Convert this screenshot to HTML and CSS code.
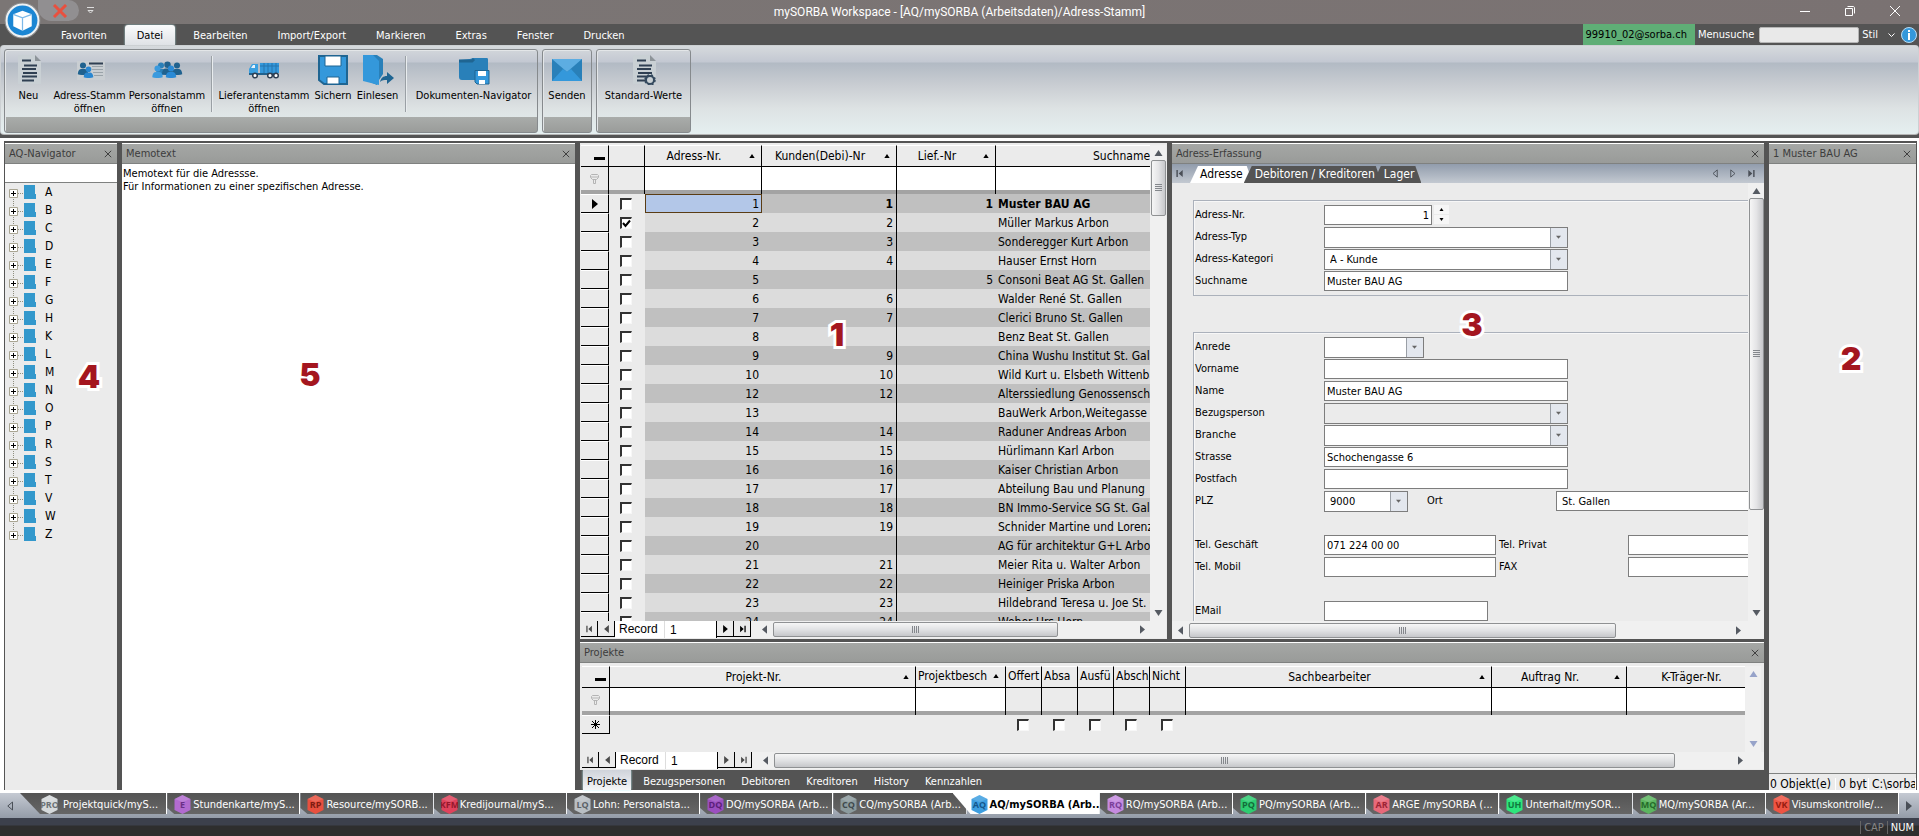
FILE: index.html
```html
<!doctype html>
<html lang="de">
<head>
  <meta charset="UTF-8">
  <meta name="viewport" content="width=device-width, initial-scale=1.0">
  <title>mySORBA Workspace</title>
  <link rel="stylesheet" href="styles.css">
</head>
<body>
  <svg class="defs" width="0" height="0">
    <symbol id="x" viewBox="0 0 10 10"><path d="M1 1l8 8M9 1l-8 8" fill="none" stroke="currentColor" stroke-width="1.2"/></symbol>
    <symbol id="up" viewBox="0 0 8 6"><path d="M0 6h8L4 0z" fill="currentColor"/></symbol>
    <symbol id="down" viewBox="0 0 8 6"><path d="M0 0h8L4 6z" fill="currentColor"/></symbol>
    <symbol id="left" viewBox="0 0 6 10"><path d="M6 0v10L0 5z" fill="currentColor"/></symbol>
    <symbol id="right" viewBox="0 0 6 10"><path d="M0 0v10l6-5z" fill="currentColor"/></symbol>
    <symbol id="left-o" viewBox="0 0 6 10"><path d="M5.500 1v8L.800 5z" fill="none" stroke="currentColor"/></symbol>
    <symbol id="right-o" viewBox="0 0 6 10"><path d="M.500 1v8l4.700-4z" fill="none" stroke="currentColor"/></symbol>
    <symbol id="first" viewBox="0 0 8 10"><path d="M0 1h1.6v8H0zM7 1v8L2.500 5z" fill="currentColor"/></symbol>
    <symbol id="last" viewBox="0 0 8 10"><path d="M6.400 1H8v8H6.400zM1 1v8l4.500-4z" fill="currentColor"/></symbol>
    <symbol id="filter" viewBox="0 0 9 10"><path d="M1.500.500h6l1 1v2l-2 2h-4l-2-2v-2zM3.500 5.500v4h2v-4M1 3h7" fill="none" stroke="currentColor"/></symbol>
    <symbol id="page" viewBox="0 0 32 32"><path d="M5 2h17v6h6v23H5z" fill="#c9d0d4"/><path d="M22 2v6h6z" fill="#8d9499"/><path d="M9 7.500h9M11 12.500h13M9 16h14M10 20h14M9 23.500h15M9 27.500h12" stroke="#2f3f52" stroke-width="2"/></symbol>
    <symbol id="person" viewBox="0 0 12 15"><circle cx="6" cy="4" r="3.500"/><path d="M0 14c0-4 2-6 4-6h4c2 0 4 2 4 6-3 1.400-9 1.400-12 0z"/></symbol>
  </svg>

  <header class="titlebar">
    <button class="orb" aria-label="Anwendungsmenü">
      <svg viewBox="0 0 36 36"><circle cx="18" cy="18" r="17" fill="#eef1f3" stroke="#8b8b8b"/><circle cx="18" cy="18" r="14.500" fill="#1b86d3"/><path d="M18 8.500l9 3.500v11.500L18 28l-9-4.500V12z" fill="#fff"/><path d="M9 12l9 3.500 9-3.500M18 15.500V28" fill="none" stroke="#7cb9e8" stroke-width="1.200"/></svg>
    </button>
    <div class="quick">
      <button aria-label="Schliessen"><svg width="16" height="14" viewBox="0 0 16 14"><path d="M2 1l12 12M14 1L2 13" stroke="#e8503f" stroke-width="3"/></svg></button>
    </div>
    <button class="quick-more" aria-label="Anpassen"><svg width="7" height="7" viewBox="0 0 7 7"><path d="M0 .500h7M1 3.500h5L3.500 6z" fill="none" stroke="#ddd"/></svg></button>
    <h1>mySORBA Workspace - [AQ/mySORBA (Arbeitsdaten)/Adress-Stamm]</h1>
    <div class="window-buttons">
      <button aria-label="Minimieren"><svg width="10" height="10" viewBox="0 0 10 10"><path d="M0 5.500h10" stroke="#fff"/></svg></button>
      <button aria-label="Wiederherstellen"><svg width="10" height="10" viewBox="0 0 10 10"><path d="M.500 2.500h7v7h-7zM2.500.500h5.500c1 0 1.500.500 1.500 1.500v5.500" fill="none" stroke="#fff"/></svg></button>
      <button aria-label="Beenden"><svg width="10" height="10" viewBox="0 0 10 10"><path d="M0 0l10 10M10 0L0 10" stroke="#fff"/></svg></button>
    </div>
  </header>

  <nav class="menubar">
    <a href="#">Favoriten</a>
    <a href="#" class="active">Datei</a>
    <a href="#">Bearbeiten</a>
    <a href="#">Import/Export</a>
    <a href="#">Markieren</a>
    <a href="#">Extras</a>
    <a href="#">Fenster</a>
    <a href="#">Drucken</a>
    <div class="menu-right">
      <span class="account">99910_02@sorba.ch</span>
      <label for="menusuche">Menusuche</label>
      <input id="menusuche" type="text">
      <button class="stil">Stil <svg width="7" height="4" viewBox="0 0 7 4"><path d="M.500.500l3 3 3-3" fill="none" stroke="#fff"/></svg></button>
      <button aria-label="Info"><svg width="16" height="16" viewBox="0 0 16 16"><circle cx="8" cy="8" r="7.500" fill="#3498db" stroke="#b9dcf3"/><path d="M7 3h2v2H7zM7 6h2v7H7z" fill="#fff"/></svg></button>
    </div>
  </nav>

  <section class="ribbon">
    <div class="group">
      <button class="w-neu"><svg viewBox="0 0 32 32"><use href="#page"/></svg>Neu</button>
      <button class="w-adr"><svg viewBox="0 0 32 32"><path d="M3 8h28v19H3z" fill="#c9ced2"/><path d="M15 10.500h14" stroke="#2f3f52" stroke-width="2"/><path d="M18 13.500h11M18 16.500h11M19 19.500h10M20 22.500h9" stroke="#9aa3a9"/><use href="#person" x="3" y="9" width="12" height="13" fill="#20628f"/><use href="#person" x="9" y="13" width="11" height="12" fill="#2a87d0"/></svg>Adress-Stamm<br>öffnen</button>
      <button class="w-per"><svg viewBox="0 0 32 32"><use href="#person" x="4" y="9" width="12" height="13" fill="#2a7fb8"/><use href="#person" x="11" y="8" width="11" height="14" fill="#20628f"/><use href="#person" x="20" y="9" width="12" height="13" fill="#20628f"/><use href="#person" x="1" y="12" width="11" height="13" fill="#3a9ade"/><use href="#person" x="14" y="12" width="12" height="13" fill="#2a8ad6"/></svg>Personalstamm<br>öffnen</button>
      <span class="divider"></span>
      <button class="w-lie"><svg viewBox="0 0 32 32"><path d="M12 10h19v10H12z" fill="#3498db"/><path d="M12 13h19M16 10v10M20 10v10M24 10v10M28 10v10" stroke="#2775ad"/><path d="M1 20v-4l3-5h6v10H1z" fill="#3ba0e0"/><path d="M3 15l2-3h2v3z" fill="#e8f3fa"/><path d="M1 20h29v2H1z" fill="#20628f"/><g fill="#fff" stroke="#2f3f52" stroke-width="1.500"><circle cx="7" cy="22.500" r="2.300"/><circle cx="22" cy="22.500" r="2.300"/><circle cx="28" cy="22.500" r="2.300"/></g></svg>Lieferantenstamm<br>öffnen</button>
      <button class="w-sic"><svg viewBox="0 0 32 32"><path d="M2 3h28v28H7l-5-4z" fill="#3498db" stroke="#1f6592" stroke-width="2"/><path d="M8 3h16v10H8zM10 24h12v7H10z" fill="#fff" stroke="#1f6592"/></svg>Sichern</button>
      <button class="w-ein"><svg viewBox="0 0 32 32"><path d="M1 2h14l6 4v15l-4 6-2 5-12-5z" fill="#2980b9"/><path d="M1 2h10l6 6v24L1 28z" fill="#3498db"/><path d="M18 29c1-4 3-6 7-6v-4l7 6-7 6v-4c-3 0-5 0-7 2z" fill="#1f6592"/></svg>Einlesen</button>
      <span class="divider"></span>
      <button class="w-dok"><svg viewBox="0 0 32 32"><path d="M1 7l11-1 3-1h14c1 0 1 1 1 2v20H4c-2 0-3-1-3-3z" fill="#2980b9"/><path d="M1 8h13l2-2" fill="none" stroke="#1f6592" stroke-width="3"/><path d="M17 17.500h14V31H19l-2-2z" fill="#3498db" stroke="#1f6592"/><path d="M20 18h8v5h-8zM21 27h6v4h-6z" fill="#fff"/></svg>Dokumenten-Navigator</button>
    </div>
    <div class="group">
      <button class="w-sen"><svg viewBox="0 0 32 32"><path d="M1 6h30v22H1z" fill="#2980b9"/><path d="M1 6h30L16 19z" fill="#5dade2"/><path d="M1 28l11-12 4 3 4-3 11 12z" fill="#3498db"/></svg>Senden</button>
    </div>
    <div class="group">
      <button class="w-sta"><svg viewBox="0 0 32 32"><use href="#page"/><circle cx="22" cy="27" r="4" fill="#c9d0d4" stroke="#34495e" stroke-width="2"/><circle cx="22" cy="27" r="5" fill="none" stroke="#34495e" stroke-width="1.500" stroke-dasharray="2 2"/></svg>Standard-Werte</button>
    </div>
  </section>

  <main class="dock">
    <aside class="panel nav">
      <header><h2>AQ-Navigator</h2><button aria-label="Schliessen"><svg><use href="#x"/></svg></button></header>
      <input type="text" class="nav-search" aria-label="Navigator-Suche">
      <ul class="tree" id="tree"></ul>
      <span class="marker m4">4</span>
    </aside>

    <section class="panel memo">
      <header><h2>Memotext</h2><button aria-label="Schliessen"><svg><use href="#x"/></svg></button></header>
      <p>Memotext für die Adressse.<br>Für Informationen zu einer spezifischen Adresse.</p>
      <span class="marker m5">5</span>
    </section>

    <div class="center">
      <div class="upper">
        <section class="panel grid-panel">
          <div class="grid-area">
            <div class="grid-clip">
              <table class="grid addresses">
                <colgroup><col class="c-head"><col class="c-check"><col class="c-adr"><col class="c-kun"><col class="c-lief"><col class="c-such"></colgroup>
                <thead>
                  <tr>
                    <th class="rowhead"><i class="minus"></i></th><th></th>
                    <th><button>Adress-Nr.<svg><use href="#up"/></svg></button></th>
                    <th><button>Kunden(Debi)-Nr<svg><use href="#up"/></svg></button></th>
                    <th><button>Lief.-Nr<svg><use href="#up"/></svg></button></th>
                    <th><button>Suchname<svg><use href="#up"/></svg></button></th>
                  </tr>
                  <tr class="filter"><td class="rowhead"><svg><use href="#filter"/></svg></td><td class="off"></td><td></td><td></td><td></td><td></td></tr>
                </thead>
                <tbody id="rows"></tbody>
              </table>
            </div>
            <div class="vscroll"><svg><use href="#up"/></svg><div class="thumb short"></div><svg class="end"><use href="#down"/></svg></div>
          </div>
          <div class="record">
            <button class="dim" aria-label="Erster"><svg><use href="#first"/></svg></button>
            <button class="dim" aria-label="Zurück"><svg><use href="#left"/></svg></button>
            <label for="rec1">Record</label><input id="rec1" type="text" value="1">
            <button aria-label="Weiter"><svg><use href="#right"/></svg></button>
            <button aria-label="Letzter"><svg><use href="#last"/></svg></button>
            <div class="hscroll"><svg><use href="#left"/></svg><div class="track"><div class="thumb h-addr"></div></div><svg><use href="#right"/></svg></div>
          </div>
          <span class="marker m1">1</span>
        </section>

        <section class="panel form-panel">
          <header><h2>Adress-Erfassung</h2><button aria-label="Schliessen"><svg><use href="#x"/></svg></button></header>
          <div class="form-tabs">
            <button class="arrow" aria-label="Anfang"><svg><use href="#first"/></svg></button>
            <a href="#" class="active">Adresse</a>
            <a href="#">Debitoren / Kreditoren</a>
            <a href="#">Lager</a>
            <div class="arrows">
              <button class="arrow" aria-label="Links"><svg><use href="#left-o"/></svg></button>
              <button class="arrow" aria-label="Rechts"><svg><use href="#right-o"/></svg></button>
              <button class="arrow" aria-label="Ende"><svg><use href="#last"/></svg></button>
            </div>
          </div>
          <div class="form-area">
            <form class="form-clip">
              <fieldset>
                <div class="row"><label for="nr">Adress-Nr.</label><input id="nr" type="text" class="s-nr" value="1"><span class="spin"><button type="button" aria-label="Mehr"><svg><use href="#up"/></svg></button><button type="button" aria-label="Weniger"><svg><use href="#down"/></svg></button></span></div>
                <div class="row"><label for="typ">Adress-Typ</label><select id="typ" class="s-full"><option></option></select></div>
                <div class="row"><label for="kat">Adress-Kategori</label><select id="kat" class="s-full"><option>A - Kunde</option></select></div>
                <div class="row"><label for="such">Suchname</label><input id="such" type="text" class="s-full" value="Muster BAU AG"></div>
              </fieldset>
              <fieldset>
                <div class="row"><label for="anr">Anrede</label><select id="anr" class="s-anr"><option></option></select></div>
                <div class="row"><label for="vor">Vorname</label><input id="vor" type="text" class="s-full"></div>
                <div class="row"><label for="nam">Name</label><input id="nam" type="text" class="s-full" value="Muster BAU AG"></div>
                <div class="row"><label for="bez">Bezugsperson</label><select id="bez" class="s-full grey"><option></option></select></div>
                <div class="row"><label for="bra">Branche</label><select id="bra" class="s-full"><option></option></select></div>
                <div class="row"><label for="str">Strasse</label><input id="str" type="text" class="s-full" value="Schochengasse 6"></div>
                <div class="row"><label for="pf">Postfach</label><input id="pf" type="text" class="s-full"></div>
                <div class="row"><label for="plz">PLZ</label><select id="plz" class="s-plz"><option>9000</option></select><label for="ort" class="l-ort">Ort</label><input id="ort" type="text" class="s-ort" value="St. Gallen"></div>
                <div class="row gap"><label for="tg">Tel. Geschäft</label><input id="tg" type="text" class="s-tel" value="071 224 00 00"><label for="tp" class="l-tel">Tel. Privat</label><input id="tp" type="text" class="s-tel"></div>
                <div class="row"><label for="tm">Tel. Mobil</label><input id="tm" type="text" class="s-tel"><label for="fax" class="l-tel">FAX</label><input id="fax" type="text" class="s-tel"></div>
                <div class="row gap"><label for="em">EMail</label><input id="em" type="text" class="s-mail"></div>
              </fieldset>
            </form>
            <div class="vscroll"><svg><use href="#up"/></svg><div class="thumb tall"></div><svg class="end"><use href="#down"/></svg></div>
          </div>
          <div class="hscroll form-scroll"><svg><use href="#left"/></svg><div class="track"><div class="thumb h-form"></div></div><svg><use href="#right"/></svg></div>
          <span class="marker m3">3</span>
        </section>
      </div>

      <section class="panel projects">
        <header><h2>Projekte</h2><button aria-label="Schliessen"><svg><use href="#x"/></svg></button></header>
        <div class="grid-area">
          <div class="grid-clip">
            <table class="grid">
              <colgroup><col class="c-head"><col class="c-wide"><col class="c-besch"><col span="5" class="c-flag"><col class="c-wide"><col class="c-kun"><col class="c-ktr"></colgroup>
              <thead>
                <tr>
                  <th class="rowhead"><i class="minus"></i></th>
                  <th><button>Projekt-Nr.<svg><use href="#up"/></svg></button></th>
                  <th class="top"><button>Projektbesch<svg><use href="#up"/></svg></button></th>
                  <th class="top">Offert</th><th class="top">Absa</th><th class="top">Ausfü</th><th class="top">Absch</th><th class="top">Nicht</th>
                  <th><button>Sachbearbeiter<svg><use href="#up"/></svg></button></th>
                  <th><button>Auftrag Nr.<svg><use href="#up"/></svg></button></th>
                  <th><button>K-Träger-Nr.<svg><use href="#up"/></svg></button></th>
                </tr>
                <tr class="filter"><td class="rowhead"><svg><use href="#filter"/></svg></td><td></td><td></td><td class="off"></td><td class="off"></td><td class="off"></td><td class="off"></td><td class="off"></td><td></td><td></td><td></td></tr>
              </thead>
              <tbody>
                <tr class="new">
                  <td class="rowhead"><svg class="star" viewBox="0 0 9 9"><path d="M4.500 0v9M0 4.500h9M1 1l7 7M8 1L1 8" stroke="#000"/></svg></td><td></td><td></td>
                  <td><input type="checkbox" aria-label="Offert"></td><td><input type="checkbox" aria-label="Absage"></td><td><input type="checkbox" aria-label="Ausführung"></td><td><input type="checkbox" aria-label="Abschluss"></td><td><input type="checkbox" aria-label="Nicht"></td>
                  <td></td><td></td><td></td>
                </tr>
              </tbody>
            </table>
          </div>
          <div class="vscroll idle"><svg><use href="#up"/></svg><svg class="end"><use href="#down"/></svg></div>
        </div>
        <div class="record">
          <button class="dim" aria-label="Erster"><svg><use href="#first"/></svg></button>
          <button class="dim" aria-label="Zurück"><svg><use href="#left"/></svg></button>
          <label for="rec2">Record</label><input id="rec2" type="text" value="1">
          <button class="dim" aria-label="Weiter"><svg><use href="#right"/></svg></button>
          <button class="dim" aria-label="Letzter"><svg><use href="#last"/></svg></button>
          <div class="hscroll"><svg><use href="#left"/></svg><div class="track"><div class="thumb h-proj"></div></div><svg><use href="#right"/></svg></div>
        </div>
      </section>
      <nav class="sub-tabs">
        <a href="#" class="active">Projekte</a><a href="#">Bezugspersonen</a><a href="#">Debitoren</a><a href="#">Kreditoren</a><a href="#">History</a><a href="#">Kennzahlen</a>
      </nav>
    </div>

    <aside class="panel side">
      <header><h2>1 Muster BAU AG</h2><button aria-label="Schliessen"><svg><use href="#x"/></svg></button></header>
      <div class="side-body"></div>
      <footer><span class="f-obj">0 Objekt(e)</span><span class="f-byte">0 byt</span><span class="f-path">C:\sorba</span></footer>
      <span class="marker m2">2</span>
    </aside>
  </main>

  <nav class="doc-tabs">
    <button aria-label="Links"><svg><use href="#left-o"/></svg></button>
    <div id="docs"></div>
    <button aria-label="Rechts"><svg><use href="#right"/></svg></button>
  </nav>

  <footer class="statusbar"><span>CAP</span><span class="on">NUM</span></footer>

  <script src="script.js"></script>
</body>
</html>
```
FILE: styles.css
```css
* {
  box-sizing: border-box;
}
html, body {
  margin: 0;
  padding: 0;
}
body {
  display: flex;
  flex-direction: column;
  height: 100vh;
  overflow: hidden;
  background: #545454;
  color: #000;
  font: 11px/13px "DejaVu Sans Condensed", "Noto Sans", sans-serif;
}
button, input, select {
  margin: 0;
  padding: 0;
  border: 0;
  border-radius: 0;
  background: none;
  color: inherit;
  font: inherit;
  outline: 0;
}
a {
  color: inherit;
  text-decoration: none;
}
h1, h2, p, ul {
  margin: 0;
  padding: 0;
  font-size: inherit;
  font-weight: normal;
}
.defs {
  display: block;
}

/* title */
.titlebar {
  position: relative;
  display: flex;
  align-items: center;
  justify-content: center;
  height: 24px;
  flex: none;
  background: linear-gradient(90deg, #7b7675, #7a7272);
  color: #fff;
}
.titlebar h1 {
  font: 12px/22px Roboto, "Noto Sans", sans-serif;
}
.orb {
  position: absolute;
  left: 4px;
  top: 2px;
  z-index: 2;
  width: 37px;
  height: 37px;
}
.orb svg {
  display: block;
  width: 100%;
}
.quick {
  position: absolute;
  left: 38px;
  top: 0;
  width: 41px;
  height: 21px;
  padding: 4px 0 0 14px;
  background: #918f91;
  border-radius: 0 11px 11px 14px;
}
.quick-more {
  position: absolute;
  left: 87px;
  top: 4px;
}
.window-buttons {
  position: absolute;
  right: 2px;
  top: 0;
  display: flex;
}
.window-buttons button {
  width: 45px;
  height: 24px;
}

/* menu */
.menubar {
  display: flex;
  align-items: flex-end;
  gap: 6px;
  flex: none;
  height: 21px;
  padding-left: 49px;
  background: #545454;
  color: #fff;
}
.menubar a {
  height: 20px;
  padding: 0 12px;
  line-height: 22px;
}
.menubar a.active {
  background: linear-gradient(#fafbfc, #dfe2e6);
  border-radius: 3px 3px 0 0;
  box-shadow: 0 0 2px #bdf3f7;
  color: #000;
}
.menu-right {
  display: flex;
  align-items: center;
  margin-left: auto;
  height: 21px;
  gap: 3px;
  padding-right: 2px;
}
.account {
  height: 21px;
  padding: 0 8px 0 3px;
  background: #5fae76;
  color: #000;
  line-height: 22px;
}
.menu-right label {
  padding-right: 2px;
}
.menu-right input {
  width: 100px;
  height: 16px;
  background: #e9e9e9;
  border: 1px solid #b5b5b5;
  border-radius: 2px;
}
.menu-right button {
  display: flex;
  align-items: center;
  gap: 10px;
}
.menu-right .stil {
  margin-right: 3px;
}

/* ribbon */
.ribbon {
  display: flex;
  gap: 4px;
  flex: none;
  height: 90px;
  padding: 3px 3px 2px;
  background: linear-gradient(#d6dadd, #c3c8d2 16px, #b2bac4 17px, #caced3 40px, #dde2e3 62px, #e5eff0);
  border: 1px solid #ccd0d3;
  border-bottom-color: #b5b5b5;
  border-radius: 4px;
}
.group {
  display: flex;
  align-items: flex-start;
  height: 84px;
  padding-top: 3px;
  border: 1px solid #868a8d;
  border-radius: 3px;
  box-shadow: inset 1px 1px #e3e6e8;
  background: linear-gradient(transparent 82%, #a9acaa 82%, #9a9c9a);
}
.group button {
  display: flex;
  flex-direction: column;
  align-items: center;
  height: 62px;
  text-align: center;
  white-space: nowrap;
}
.group svg {
  flex: none;
  width: 32px;
  height: 32px;
  margin-bottom: 4px;
}
.divider {
  width: 1px;
  height: 56px;
  margin: 3px 4px 0;
  background: #9aa0a5;
  box-shadow: 1px 0 #e8ecee;
}
.w-neu { width: 47px; }
.w-adr { width: 75px; }
.w-per { width: 80px; }
.w-lie { width: 96px; }
.w-sic { width: 42px; }
.w-ein { width: 47px; }
.w-dok { width: 127px; }
.w-sen { width: 48px; }
.w-sta { width: 93px; }

/* dock */
.dock {
  display: flex;
  gap: 5px;
  flex: 1;
  min-height: 0;
  margin-top: 3px;
  padding: 2px 1px 0 1px;
  border: 4px solid #fff;
  border-width: 3px 2px 3px 4px;
  background: #545454;
}
.panel {
  position: relative;
  display: flex;
  flex-direction: column;
  min-width: 0;
  background: #ebebeb;
}
.panel > header {
  display: flex;
  align-items: center;
  flex: none;
  height: 21px;
  padding: 0 5px 0 4px;
  background: linear-gradient(#a5a7a5, #999b99);
  border-top: 1px solid #fff;
  border-bottom: 1px solid #7f8180;
  color: #3c3c3c;
}
.panel > header h2 {
  flex: 1;
  white-space: nowrap;
}
.panel > header svg {
  display: block;
  width: 8px;
  height: 8px;
}
.nav {
  width: 112px;
  flex: none;
}
.nav-search {
  flex: none;
  width: 100%;
  height: 19px;
  background: #fff;
  border-bottom: 1px solid #7f8180;
}
.tree {
  list-style: none;
  padding-left: 4px;
  overflow: hidden;
}
.tree li {
  display: flex;
  align-items: center;
  height: 18px;
  font-size: 12px;
}
.tree svg {
  width: 27px;
  height: 18px;
  margin-right: 9px;
}
.memo {
  width: 453px;
  flex: none;
  background: #fff;
}
.memo p {
  padding: 3px 1px;
}
.center {
  display: flex;
  flex-direction: column;
  flex: 1;
  min-width: 0;
}
.upper {
  display: flex;
  gap: 5px;
  flex: 1;
  min-height: 0;
  margin-bottom: 3px;
}
.grid-panel {
  flex: 1;
  padding: 2px 1px 1px;
}
.side {
  width: 147px;
  flex: none;
  overflow: hidden;
}
.side-body {
  flex: 1;
}
.side footer {
  display: flex;
  gap: 3px;
  height: 17px;
  padding: 4px 0 0 1px;
  border-top: 1px solid #7f8180;
  overflow: hidden;
  font-size: 12px;
  white-space: nowrap;
}
.side footer span {
  overflow: hidden;
  border-right: 1px solid #fff;
}
.f-obj { width: 66px; }
.f-byte { width: 30px; }
.f-path { flex: 1; }

/* grids */
.grid-area {
  display: flex;
  flex: 1;
  min-height: 0;
}
.grid-clip {
  flex: 1;
  min-width: 0;
  overflow: hidden;
}
.grid {
  width: 100px;
  table-layout: fixed;
  border-collapse: separate;
  border-spacing: 0;
  font-size: 12px;
  line-height: 14px;
  white-space: nowrap;
}
.c-head { width: 28px; }
.c-check { width: 36px; }
.c-adr { width: 117px; }
.c-kun { width: 135px; }
.c-lief { width: 99px; }
.c-such { width: 270px; }
.c-wide { width: 306px; }
.c-besch { width: 90px; }
.c-flag { width: 36px; }
.c-ktr { width: 148px; }
.grid th, .grid td {
  padding: 0;
  overflow: hidden;
}
.grid th {
  height: 22px;
  border-top: 1px solid #fff;
  border-right: 1px solid #000;
  border-bottom: 1px solid #000;
  font-weight: normal;
}
.grid th.top {
  padding: 2px 0 0 2px;
  text-align: left;
  vertical-align: top;
}
.grid th button {
  display: flex;
  align-items: center;
  justify-content: center;
  position: relative;
  width: 100%;
  padding-right: 18px;
}
.grid th.top button {
  justify-content: flex-start;
  padding-right: 0;
}
.grid th svg {
  position: absolute;
  right: 5px;
  top: 5px;
  width: 8px;
  height: 4px;
}
.filter td {
  height: 27px;
  border-right: 1px solid #000;
  background: #fff;
  box-shadow: inset 0 -4px #a3a3a3;
}
.filter td.off, .filter td.rowhead {
  background: #ebebeb;
}
.filter svg {
  display: block;
  width: 9px;
  height: 10px;
  margin: 0 auto 3px;
  color: #b4b4b4;
}
.minus {
  display: block;
  width: 11px;
  height: 3px;
  margin: 4px 0 0 13px;
  background: #000;
}
.addresses tbody tr {
  background: #dcdcdc;
}
.addresses tbody tr:nth-child(odd) {
  background: #c0c0c0;
}
.grid tbody td {
  height: 19px;
  text-align: right;
  padding-right: 3px;
}
.grid tbody td.rowhead {
  padding: 0;
  border-top: 1px solid #fff;
  border-right: 1px solid #000;
  border-bottom: 1px solid #000;
  background: #ebebeb;
}
.grid tbody td.rowhead svg {
  display: block;
  width: 6px;
  height: 10px;
  margin: 0 auto;
}
.grid tbody td.rowhead .star {
  width: 9px;
  height: 9px;
}
.grid tbody td.check {
  background: #ebebeb;
}
.grid tbody td.kun {
  border-right: 1px solid #000;
}
.grid tbody td.name {
  padding-left: 2px;
  text-align: left;
}
.grid tbody .first td {
  font-weight: bold;
}
.grid tbody .first td.nr {
  border: 1px solid #5a3c14;
  background: #b3c7e8;
  font-weight: normal;
  padding-right: 2px;
}
.grid input {
  appearance: none;
  display: block;
  width: 12px;
  height: 12px;
  margin: 0 0 0 11px;
  background: #fff;
  border: 1px solid #f7f7f7;
  border-top: 2px solid #333;
  border-left: 2px solid #333;
}
.grid input:checked {
  background: #fff url("data:image/svg+xml,%3Csvg xmlns='http://www.w3.org/2000/svg' viewBox='0 0 9 9'%3E%3Cpath d='M1 4l2.500 3L8 1.500' fill='none' stroke='%23000' stroke-width='2'/%3E%3C/svg%3E");
}

/* scrollbars */
.vscroll {
  display: flex;
  flex-direction: column;
  align-items: center;
  gap: 4px;
  width: 16px;
  padding: 5px 0;
  background: #f0f0f0;
  color: #555a62;
}
.vscroll svg {
  flex: none;
  width: 9px;
  height: 6px;
}
.vscroll .end {
  margin-top: auto;
}
.vscroll.idle {
  margin-right: 2px;
  color: #97a3c9;
}
.vscroll .thumb {
  display: flex;
  width: 15px;
  background: linear-gradient(90deg, #f6f6f6, #e4e4e6 50%, #c6c7ca);
  border: 1px solid #8f9193;
  border-radius: 2px;
}
.vscroll .thumb::after {
  content: "";
  width: 7px;
  height: 8px;
  margin: auto;
  background: repeating-linear-gradient(#84878c 0 1px, transparent 1px 2px);
}
.thumb.short { height: 56px; }
.thumb.tall { height: 312px; }
.record {
  display: flex;
  flex: none;
  height: 17px;
  font: 12px/16px "Liberation Sans", Arial, sans-serif;
}
.record > button {
  width: 17px;
  height: 16px;
  border: 1px solid #000;
  border-width: 0 1px 1px 0;
  background: #ebebeb;
}
.record > button svg {
  display: block;
  width: 7px;
  height: 8px;
  margin: 0 auto;
}
.record > .dim {
  color: #4a4a4a;
}
.record label {
  width: 49px;
  padding-left: 4px;
  background: #fff;
}
.record input {
  width: 53px;
  padding-left: 5px;
  background: #fff;
  border-left: 1px solid #ddd;
  border-right: 1px solid #000;
}
.hscroll {
  display: flex;
  align-items: center;
  flex: 1;
  padding: 0 21px 0 11px;
  background: #f0f0f0;
  color: #555a62;
}
.hscroll svg {
  width: 5px;
  height: 9px;
}
.track {
  flex: 1;
  padding: 0 6px;
}
.hscroll .thumb {
  display: flex;
  height: 15px;
  background: linear-gradient(#f6f6f6, #e1e2e4 50%, #c6c7ca);
  border: 1px solid #8f9193;
  border-radius: 2px;
}
.hscroll .thumb::after {
  content: "";
  width: 7px;
  height: 7px;
  margin: auto;
  background: repeating-linear-gradient(90deg, #84878c 0 1px, transparent 1px 2px);
}
.h-addr { width: 79%; }
.h-form { width: 79%; }
.h-proj { width: 94%; }

/* form */
.form-panel {
  width: 592px;
  flex: none;
}
.form-tabs {
  display: flex;
  align-items: flex-end;
  flex: none;
  height: 19px;
  background: linear-gradient(#919cac, #c3c9d1);
  color: #fff;
}
.form-tabs a {
  height: 17px;
  margin-left: -9px;
  padding: 0 7px 0 11px;
  background: #545454;
  clip-path: polygon(0 100%, 8px 0, calc(100% - 6px) 0, 100% 100%);
  font-size: 12px;
  line-height: 17px;
}
.form-tabs a.active {
  position: relative;
  margin-left: 5px;
  padding: 0 10px;
  background: #fff;
  color: #000;
}
.form-tabs .arrow {
  width: 9px;
  height: 19px;
  margin-left: 4px;
  color: #4a4f57;
}
.arrow svg {
  display: block;
  width: 8px;
  height: 9px;
}
.arrows {
  display: flex;
  gap: 5px;
  margin-left: auto;
  padding-right: 8px;
}
.form-area {
  display: flex;
  flex: 1;
  min-height: 0;
}
.form-clip {
  flex: 1;
  min-width: 0;
  overflow: hidden;
  padding: 17px 0 0 21px;
}
fieldset {
  width: 700px;
  margin: 0 0 36px;
  padding: 4px 0 2px 1px;
  border: 1px solid #abb1bb;
  box-shadow: inset 1px 1px #f7f7f7;
}
.row {
  display: flex;
  height: 22px;
}
.row.gap {
  margin-top: 22px;
}
.row label {
  flex: none;
  width: 129px;
  padding-top: 3px;
}
.row input, .row select {
  flex: none;
  height: 20px;
  padding: 0 2px;
  background: #fff;
  border: 1px solid #7d7d7d;
}
.row select {
  appearance: none;
  height: 21px;
  padding: 0 20px 0 5px;
  background: #fff url("data:image/svg+xml,%3Csvg xmlns='http://www.w3.org/2000/svg' width='17' height='20'%3E%3Cpath d='M0 0h17v20H0z' fill='%23e3e7ee'/%3E%3Cpath d='M.500 0v20' stroke='%239a9fa6'/%3E%3Cpath d='M6 8h5L8.500 11z' fill='%23666'/%3E%3C/svg%3E") right center no-repeat;
}
.row .grey {
  background-color: #ebebeb;
}
.s-full { width: 244px; }
.s-anr { width: 100px; }
.s-plz { width: 84px; }
.s-tel { width: 172px; }
.s-mail { width: 164px; }
.s-ort { width: 244px; }
.row .s-nr {
  width: 108px;
  text-align: right;
}
.row .l-ort {
  margin-left: 19px;
}
.row .l-tel {
  margin-left: 3px;
}
.row .s-ort {
  padding-left: 5px;
}
.spin {
  display: flex;
  flex-direction: column;
  gap: 1px;
  margin-left: 2px;
}
.spin button {
  display: flex;
  width: 15px;
  height: 9px;
  background: #f6f6f6;
}
.spin svg {
  width: 5px;
  height: 3px;
  margin: auto;
}
.form-scroll {
  flex: none;
  height: 18px;
  padding: 0 23px 0 6px;
}

.projects {
  height: 128px;
  flex: none;
  padding-bottom: 1px;
}
.projects .grid-area {
  padding: 3px 1px 0 2px;
}
.projects .record {
  padding-left: 2px;
}
.sub-tabs {
  display: flex;
  flex: none;
  height: 20px;
  padding: 0 0 0 3px;
  color: #fff;
}
.sub-tabs a {
  padding: 0 8px;
  line-height: 23px;
}
.sub-tabs a.active {
  padding: 0 4px;
  background: linear-gradient(#cfd3da, #f4f5f7);
  box-shadow: 0 0 2px #bdf3f7;
  color: #000;
  margin-right: 4px;
}

/* number markers above the panels */
.marker {
  position: absolute;
  color: #a4161f;
  font: 900 32px/32px Inter, "Liberation Sans", sans-serif;
  -webkit-text-stroke: 6px #fff;
  paint-order: stroke fill;
  transform: translate(-50%, -50%);
}
.m1 { left: 257px; top: 192px; }
.m2 { left: 82px; top: 216px; }
.m3 { left: 300px; top: 182px; }
.m4 { left: 84px; top: 234px; }
.m5 { left: 188px; top: 232px; }

/* document tabs */
.doc-tabs {
  display: flex;
  flex: none;
  height: 25px;
  background: linear-gradient(#c5cad3, #949ca8);
}
.doc-tabs > button {
  width: 20px;
  color: #4a4f57;
}
.doc-tabs > button svg {
  display: block;
  width: 6px;
  height: 10px;
  margin: 0 auto;
}
#docs {
  display: flex;
  flex: 1;
  min-width: 0;
}
#docs a {
  display: flex;
  align-items: center;
  gap: 2px;
  flex: 1 1 133px;
  min-width: 0;
  height: 21px;
  padding: 1px 4px 0 7px;
  background: linear-gradient(#545454, #666);
  border-right: 1px solid #fff;
  clip-path: polygon(0 0, 100% 0, 100% 100%, 7px 100%, 0 15px);
  color: #fff;
  white-space: nowrap;
}
#docs a:first-child {
  flex: 1 1 147px;
  gap: 5px;
  padding-left: 21px;
  clip-path: polygon(0 0, 100% 0, 100% 100%, 20px 100%);
}
#docs a.active {
  flex: 1 1 147px;
  margin-left: -14px;
  padding-left: 18px;
  background: #fff;
  border: 0;
  clip-path: polygon(0 0, 100% 0, 100% 100%, 18px 100%);
  color: #000;
  font-weight: bold;
}
#docs svg {
  flex: none;
  width: 17px;
  height: 19px;
}
#docs text {
  font: bold 9px "Open Sans", sans-serif;
}

.statusbar {
  display: flex;
  justify-content: flex-end;
  align-items: center;
  flex: none;
  height: 18px;
  padding-right: 2px;
  background: linear-gradient(#3c404c 0 7px, #2e2e2e 8px);
  color: #858585;
}
.statusbar span {
  padding: 0 3px;
  border-left: 1px solid #666;
}
.statusbar .on {
  color: #fff;
}
```
FILE: script.js
```js
var rows = [
  ['1', '1', '1', 'Muster BAU AG'],
  ['2', '2', '', 'Müller Markus Arbon'],
  ['3', '3', '', 'Sonderegger Kurt Arbon'],
  ['4', '4', '', 'Hauser Ernst Horn'],
  ['5', '', '5', 'Consoni Beat AG St. Gallen'],
  ['6', '6', '', 'Walder René St. Gallen'],
  ['7', '7', '', 'Clerici Bruno St. Gallen'],
  ['8', '', '', 'Benz Beat St. Gallen'],
  ['9', '9', '', 'China Wushu Institut St. Gallen'],
  ['10', '10', '', 'Wild Kurt u. Elsbeth Wittenbach'],
  ['12', '12', '', 'Alterssiedlung Genossenschaft'],
  ['13', '', '', 'BauWerk Arbon,Weitegasse'],
  ['14', '14', '', 'Raduner Andreas Arbon'],
  ['15', '15', '', 'Hürlimann Karl Arbon'],
  ['16', '16', '', 'Kaiser Christian Arbon'],
  ['17', '17', '', 'Abteilung Bau und Planung'],
  ['18', '18', '', 'BN Immo-Service SG St. Gallen'],
  ['19', '19', '', 'Schnider Martine und Lorenz'],
  ['20', '', '', 'AG für architektur G+L Arbon'],
  ['21', '21', '', 'Meier Rita u. Walter Arbon'],
  ['22', '22', '', 'Heiniger Priska Arbon'],
  ['23', '23', '', 'Hildebrand Teresa u. Joe St. Gallen'],
  ['24', '24', '', 'Weber Urs Horn']
];

document.getElementById('rows').innerHTML = rows.map(function(r, i) {
  return '<tr' + (i == 0 ? ' class="first"' : '') + '>' +
    '<td class="rowhead">' + (i == 0 ? '<svg><use href="#right"/></svg>' : '') + '</td>' +
    '<td class="check"><input type="checkbox" aria-label="Auswahl ' + r[0] + '"' + (i == 1 ? ' checked' : '') + '></td>' +
    '<td class="nr">' + r[0] + '</td><td class="kun">' + r[1] + '</td><td>' + r[2] + '</td><td class="name">' + r[3] + '</td></tr>';
}).join('');

document.getElementById('tree').innerHTML = 'ABCDEFGHKLMNOPRSTVWZ'.split('').map(function(c, i) {
  return '<li><svg viewBox="0 0 27 18">' +
    '<path d="M4.500 ' + (i == 0 ? 10 : 0) + 'V' + (c == 'Z' ? 10 : 18) + 'M9 10.500h6" stroke="#8f8f80" stroke-dasharray="1 1"/>' +
    '<path d="M.500 6.500h8v8h-8z" fill="#fff" stroke="#a9a592"/><path d="M2 10.500h5M4.500 8v5" stroke="#000"/>' +
    '<path d="M15 2h11v9h1v5H15z" fill="#3398cc"/></svg>' + c + '</li>';
}).join('');

// code, caption, fill, letter colour
var docs = [
  ['PRO', 'Projektquick/myS...', '#d5d9db', '#6b7175'],
  ['E', 'Stundenkarte/myS...', '#b26bd0', '#6a2f86'],
  ['RP', 'Resource/mySORB...', '#e8503f', '#7d1c12'],
  ['KFM', 'Kredijournal/myS...', '#e0435c', '#96182c'],
  ['LQ', 'Lohn: Personalsta...', '#b9bfc4', '#5b6268'],
  ['DQ', 'DQ/mySORBA (Arb...', '#9b4fc0', '#5b2079'],
  ['CQ', 'CQ/mySORBA (Arb...', '#8c9b9e', '#3f4a4d'],
  ['AQ', 'AQ/mySORBA (Arb...', '#3d9ee0', '#14578c'],
  ['RQ', 'RQ/mySORBA (Arb...', '#c58be0', '#7b3f99'],
  ['PQ', 'PQ/mySORBA (Arb...', '#2ecc71', '#136b39'],
  ['AR', 'ARGE /mySORBA (...', '#e8697a', '#9c2435'],
  ['UH', 'Unterhalt/mySOR...', '#2ee67c', '#107a3f'],
  ['MQ', 'MQ/mySORBA (Ar...', '#5cb560', '#256b2a'],
  ['VK', 'Visumskontrolle/...', '#ee5443', '#951b10']
];

document.getElementById('docs').innerHTML = docs.map(function(d) {
  return '<a href="#"' + (d[0] == 'AQ' ? ' class="active"' : '') + '><svg viewBox="0 0 17 19">' +
    '<path d="M8.500 0l8 4v11l-8 4-8-4V4z" fill="' + d[2] + '"/><path d="M8.500 0l8 4-8 3-8-3z" fill="#fff" opacity=".15"/>' +
    '<text x="8.500" y="13" text-anchor="middle" fill="' + d[3] + '">' + d[0] + '</text></svg>' + d[1] + '</a>';
}).join('');
```
